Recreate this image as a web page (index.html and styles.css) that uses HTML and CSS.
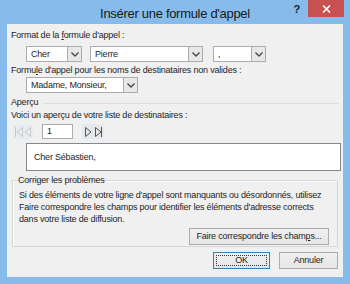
FILE: index.html
```html
<!DOCTYPE html>
<html lang="fr">
<head>
    <meta charset="UTF-8">
    <title>Insérer une formule d'appel</title>
    <link rel="stylesheet" href="styles.css">
</head>
<body>
    <div class="window">
        <div class="titlebar">
            <span class="title">Insérer une formule d'appel</span>
            <span class="help">?</span>
            <span class="close">
                <svg width="9" height="8" viewBox="0 0 9 8"><path d="M1 0.5 L8 7.5 M8 0.5 L1 7.5" stroke="#fff" stroke-width="1.6"/></svg>
            </span>
        </div>

        <div class="content">
            <div class="label">Format de la <u>f</u>ormule d'appel :</div>
            <div class="row indent first">
                <div class="select w-cher"><span class="value">Cher</span><span class="drop"></span></div>
                <div class="select w-pierre"><span class="value">Pierre</span><span class="drop"></span></div>
                <div class="select w-comma"><span class="value">,</span><span class="drop"></span></div>
            </div>

            <div class="label second">Formu<u>l</u>e d'appel pour les noms de destinataires non valides :</div>
            <div class="row indent">
                <div class="select w-madame"><span class="value">Madame, Monsieur,</span><span class="drop"></span></div>
            </div>

            <div class="section">
                <span>Aperçu</span>
                <span class="rule"></span>
            </div>
            <div class="label">Voici un aperçu de votre liste de destinataires :</div>

            <div class="nav">
                <div class="navbtns disabled">
                    <svg width="20" height="14" viewBox="0 0 20 14">
                        <path d="M2.5 2 V12 M9.5 2.5 L4 7 L9.5 11.5 Z M17.5 2.5 L12 7 L17.5 11.5 Z" fill="none" stroke="#c4c8cc"/>
                    </svg>
                </div>
                <div class="record">1</div>
                <div class="navbtns">
                    <svg width="22" height="14" viewBox="0 0 22 14">
                        <path d="M3.5 2.5 L9 7 L3.5 11.5 Z M13.5 2.5 L19 7 L13.5 11.5 Z M19.5 2 V12" fill="none" stroke="#555"/>
                    </svg>
                </div>
            </div>

            <div class="preview">Cher Sébastien,</div>

            <div class="group">
                <div class="group-title">Corriger les problèmes</div>
                <p>Si des éléments de votre ligne d'appel sont manquants ou désordonnés, utilisez<br>
                Faire correspondre les champs pour identifier les éléments d'adresse corrects<br>
                dans votre liste de diffusion.</p>
                <div class="group-actions">
                    <button class="btn btn-match">Faire correspondre les cham<u>p</u>s...</button>
                </div>
            </div>

            <div class="actions">
                <button class="btn btn-ok"><span class="focus">OK</span></button>
                <button class="btn btn-cancel">Annuler</button>
            </div>
        </div>
    </div>
</body>
</html>
```

FILE: styles.css
```css
/* Global */
* {
    box-sizing: border-box;
    margin: 0;
    padding: 0;
}

body {
    font-family: 'Liberation Sans', Arial, sans-serif;
    font-size: 9px;
    letter-spacing: -0.2px;
    color: #1e1e1e;
    background: #86bbec;
}

u {
    text-decoration: underline;
    text-underline-offset: 1px;
}

/* Fenetre */
.window {
    width: 350px;
    height: 284px;
    background: #86bbec;
    display: flex;
    flex-direction: column;
    padding: 0 7px 7px 7px;
}

.titlebar {
    height: 24px;
    position: relative;
    display: flex;
    align-items: center;
    justify-content: center;
}

.title {
    font-size: 13px;
    letter-spacing: -0.3px;
    color: #1a1a1a;
    padding-top: 2px;
}

.help {
    position: absolute;
    right: 43px;
    top: 3px;
    font-size: 11px;
    font-weight: bold;
    color: #222;
}

.close {
    position: absolute;
    right: -1px;
    top: 0;
    width: 36px;
    height: 17px;
    background: #c75050;
    display: flex;
    align-items: center;
    justify-content: center;
}

.content {
    flex: 1;
    background: #f0f0f0;
    padding: 5px 5px 0 4px;
    line-height: 13px;
}

.label {
    height: 13px;
    white-space: nowrap;
}

.label.second {
    margin-top: 2px;
}

.row {
    display: flex;
    gap: 8px;
}

.row.first {
    margin-top: 4px;
}

.indent {
    padding-left: 15px;
}

/* Listes deroulantes */
.select {
    height: 16px;
    border: 1px solid #acacac;
    background: #fff;
    display: flex;
    align-items: stretch;
}

.select .value {
    flex: 1;
    padding-left: 4px;
    line-height: 14px;
    white-space: nowrap;
}

.select .drop {
    width: 14px;
    border-left: 1px solid #acacac;
    background: #e8e8e8 url("data:image/svg+xml,%3Csvg xmlns='http://www.w3.org/2000/svg' width='8' height='5'%3E%3Cpath d='M0.5 0.5 L4 4 L7.5 0.5' fill='none' stroke='%23444' stroke-width='1.3'/%3E%3C/svg%3E") no-repeat center;
}

.w-cher { width: 56px; }
.w-pierre { width: 113px; }
.w-comma { width: 53px; margin-left: 2px; }
.w-madame { width: 112px; }

/* Apercu */
.section {
    display: flex;
    align-items: center;
    gap: 5px;
    margin-top: 3px;
    height: 13px;
}

.section .rule {
    flex: 1;
    border-top: 1px solid #dcdcdc;
    margin-top: 1px;
}

.label + .nav,
.nav {
    display: flex;
    align-items: center;
    gap: 9px;
    margin: 2px 0 0 2px;
    height: 15px;
}

.navbtns {
    display: flex;
    background: #e6e9ec;
    height: 15px;
    align-items: center;
}

.navbtns.disabled {
    background: #e8ecef;
}

.record {
    width: 31px;
    height: 15px;
    border: 1px solid #acacac;
    background: #fff;
    padding-left: 4px;
    line-height: 13px;
}

.preview {
    margin: 4px 0 0 15px;
    width: 315px;
    height: 28px;
    border: 1px solid #828790;
    background: #fff;
    padding-left: 7px;
    line-height: 26px;
}

/* Corriger */
.group {
    margin: 9px 0 0 1px;
    border: 1px solid #d5d5d5;
    box-shadow: inset 1px 1px 0 #fff;
    background: #f0f0f0;
    height: 67px;
    padding: 0 8px 0 5px;
}

.group-title {
    margin-top: -7px;
    height: 13px;
}

.group p {
    margin-top: 2px;
    padding-left: 1px;
    line-height: 12px;
    white-space: nowrap;
}

.group-actions {
    display: flex;
    justify-content: flex-end;
    margin-top: 3px;
}

/* Boutons */
.btn {
    font-family: inherit;
    font-size: 9px;
    letter-spacing: -0.2px;
    color: #1e1e1e;
    height: 17px;
    border: 1px solid #acacac;
    background: linear-gradient(#f0f0f0, #e5e5e5);
    line-height: 13px;
}

.btn-match {
    width: 140px;
}

.actions {
    display: flex;
    justify-content: flex-end;
    gap: 9px;
    margin-top: 5px;
    padding-right: 0;
}

.btn-ok {
    width: 57px;
    border-color: #3c7fb1;
    padding: 2px;
}

.btn-ok .focus {
    display: block;
    height: 11px;
    line-height: 9px;
    border: 1px dotted #333;
}

.btn-cancel {
    width: 59px;
}
```
